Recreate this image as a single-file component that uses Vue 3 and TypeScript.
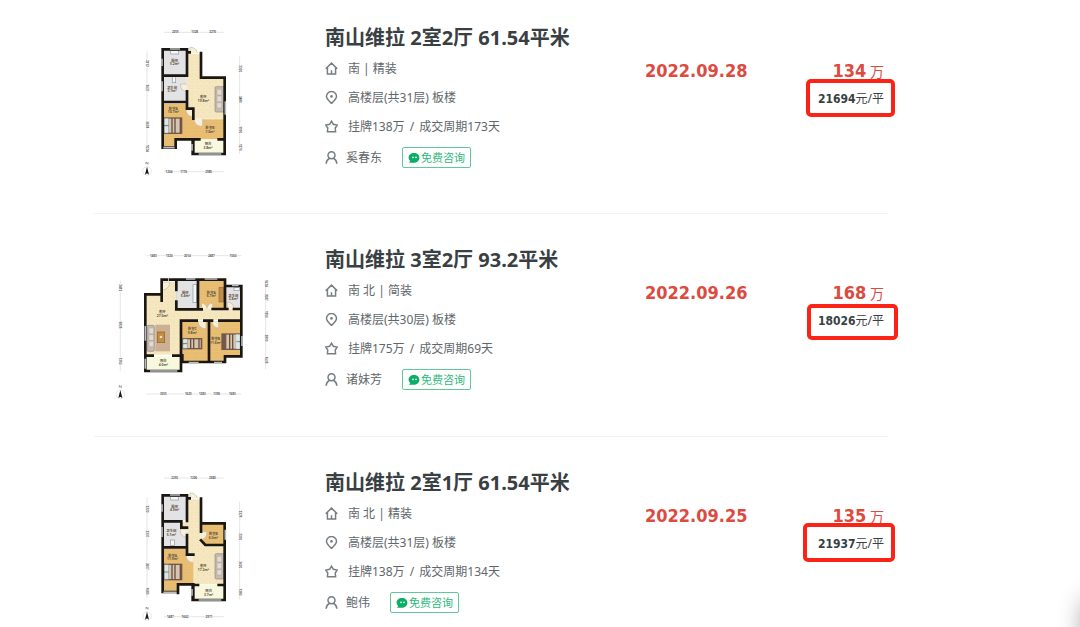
<script setup lang="ts">
type IconName = 'home' | 'pin' | 'star' | 'user'
type Label = [x: number, y: number, text: string]
type Rect = [x: number, y: number, w: number, h: number]

interface Plan {
  floors: { kind: 'wood' | 'tile' | 'grey' | 'balcony'; d: string }[]
  walls: string
  windows: string
  doors: string
  beds: Rect[]
  sofa: Rect
  rug?: Rect
  fixtures: Rect[]
  names: Label[]
  top: Label[]
  bottom: Label[]
  left: Label[]
  right: Label[]
  guides: string
  compass: [number, number]
}

interface Deal {
  id: number
  title: string
  facing: string
  fitment: string
  floor: string
  listed: string
  cycle: string
  agent: string
  date: string
  total: string
  unit: string
  mark: 'a' | 'b' | 'c'
  plan: Plan
}

const planA: Plan = {
  floors: [
    { kind: 'grey', d: 'M158 95h72v76h-72zM158 177h72v74h-72z' },
    { kind: 'tile', d: 'M234 107h38v73h71v122h-95v-33h-18v-95h4z' },
    { kind: 'wood', d: 'M158 257h72v15h20v92h-52v25h-40zM250 304h94v60h-94z' },
    { kind: 'balcony', d: 'M250 366h92v44h-92z' },
  ],
  walls: 'M158 94H231V103H239M273 105V179H344V408H248V364H197V389H158V94M158 173H231M231 104V172M231 220V272H250V302M250 364V408M158 252H210M231 270V252H214M250 364H268M326 364H344',
  windows: 'M156 122v22M156 190v30M346 250v40M160 389h34M266 408h68M180 93h30M246 378v20',
  doors: 'M240 105V88A20 20 0 0 1 262 104M230 198H212A18 18 0 0 0 230 220M250 274H228A20 20 0 0 0 250 296M253 302A20 20 0 0 0 278 324V302',
  beds: [[161, 298, 56, 50]],
  sofa: [315, 206, 28, 76],
  fixtures: [[182, 98, 24, 10], [187, 176, 10, 18]],
  names: [[194, 131, '厨房'], [194, 142, '5.2m²'], [186, 212, '卫生间'], [186, 223, '3.7m²'], [280, 240, '客厅'], [280, 251, '19.8m²'], [190, 275, '卧室A'], [190, 286, '10.7m²'], [300, 334, '卧室B'], [300, 345, '7.0m²'], [294, 382, '阳台'], [294, 393, '3.8m²']],
  top: [[196, 46, '2255'], [254, 46, '1328'], [308, 46, '2270']],
  bottom: [[177, 464, '1204'], [221, 464, '1770'], [296, 464, '2985']],
  left: [[111, 136, '2312'], [111, 210, '2637'], [111, 320, '3638'], [111, 391, '1024']],
  right: [[389, 152, '2320'], [389, 244, '3480'], [389, 335, '1990'], [389, 388, '1270']],
  guides: 'M162 43H341M162 461H341M111 100V403M389 113V408',
  compass: [111, 459],
}

const planC: Plan = {
  floors: [
    { kind: 'grey', d: 'M158 99h72v72h-72zM158 177h54v18h18v56h-72z' },
    { kind: 'tile', d: 'M234 109h38v126l20 13h52v116h-96v-93h-18v-76h-16v-18h20z' },
    { kind: 'wood', d: 'M158 257h72v15h20v92h-48v25h-44zM274 182h70v64h-54l-16-16z' },
    { kind: 'balcony', d: 'M250 366h92v42h-92z' },
  ],
  walls: 'M158 97H231V106H239M273 107V181H344V411H248V364H204V387H158V97M158 175H214V194H231M231 106V174M231 216V275H250M231 272V253H214M158 253H210M273 181V206M273 232L286 246H344M250 364V411M250 366H264M326 366H344M204 364V390',
  windows: 'M156 124v22M156 192v30M346 200v30M160 388h40M266 411h68M180 96h30M246 378v20',
  doors: 'M240 107V90A20 20 0 0 1 262 106M230 198H212A18 18 0 0 0 230 222M250 276H228A20 20 0 0 0 250 298M274 206H290A20 20 0 0 1 274 230',
  beds: [[161, 302, 56, 50]],
  sofa: [315, 272, 28, 76],
  fixtures: [[182, 101, 24, 10], [181, 231, 12, 16]],
  names: [[194, 134, '厨房'], [194, 145, '4.9m²'], [184, 207, '卫生间'], [184, 218, '5.1m²'], [310, 216, '卧室B'], [310, 227, '6.0m²'], [188, 281, '卧室A'], [188, 292, '11.9m²'], [280, 313, '客厅'], [280, 324, '17.2m²'], [296, 387, '阳台'], [296, 398, '3.7m²']],
  top: [[194, 48, '2255'], [251, 48, '1200'], [307, 48, '2380']],
  bottom: [[181, 464, '1487'], [225, 464, '1602'], [297, 464, '2971']],
  left: [[111, 138, '2320'], [111, 213, '2337'], [111, 310, '3607'], [111, 384, '1080']],
  right: [[389, 153, '2325'], [389, 221, '2330'], [389, 305, '3620'], [389, 387, '1380']],
  guides: 'M162 45H341M162 461H341M111 102V405M389 116V410',
  compass: [111, 459],
}

const planB: Plan = {
  floors: [
    { kind: 'tile', d: 'M109 164h46v-38h42v81h195v33h-182v104h-101z' },
    { kind: 'grey', d: 'M201 120h61v85h-61zM347 141h47v63h-47z' },
    { kind: 'wood', d: 'M266 121h76v83h-76zM213 243h82v125h-82zM299 243h93v104h-48v21h-45z' },
    { kind: 'balcony', d: 'M109 349h101v42h-101z' },
  ],
  walls: 'M106 163H155V119H170M180 119H345V138H394V349H345V366H217V346H213V242H260M106 163V393H213V348M106 347H128M190 347H213M199 119V150M199 185V208H275M264 119V207M345 138V207M308 207H352M372 207H394M283 242H306M328 242H394M297 242V366M155 163V182M106 363V393',
  windows: 'M228 117h28M284 117h38M366 136h20M106 258v44M120 393h82M236 368h30M312 368h24M396 288v30M106 356v30',
  doors: 'M158 126H179A22 22 0 0 1 158 150M275 207V190A16 16 0 0 1 291 205A16 16 0 0 1 308 190V207M352 206V186A20 20 0 0 1 372 206M264 244A22 22 0 0 0 288 266V244M306 244A20 20 0 0 0 326 264V244M199 155V180',
  beds: [[217, 294, 60, 34], [334, 280, 58, 50]],
  sofa: [111, 256, 22, 78],
  rug: [142, 254, 34, 80],
  fixtures: [[249, 134, 11, 54], [372, 143, 16, 9]],
  names: [[226, 161, '厨房'], [226, 172, '5.4m²'], [304, 161, '卧室A'], [304, 172, '6.7m²'], [370, 170, '卫生间'], [370, 181, '2.8m²'], [157, 220, '客厅'], [157, 231, '27.0m²'], [247, 271, '卧室C'], [247, 282, '9.8m²'], [317, 301, '卧室B'], [317, 312, '11.6m²'], [160, 367, '阳台'], [160, 378, '4.0m²']],
  top: [[130, 50, '1483'], [178, 50, '1320'], [232, 50, '2014'], [304, 50, '2487'], [369, 50, '1560']],
  bottom: [[160, 465, '3355'], [235, 465, '1625'], [277, 465, '1283'], [320, 465, '1390'], [367, 465, '1683']],
  left: [[31, 143, '2412'], [31, 255, '5835'], [31, 363, '1250']],
  right: [[467, 130, '1624'], [467, 172, '2087'], [467, 223, '1250'], [467, 294, '3890'], [467, 360, '1635']],
  guides: 'M110 47H394M110 462H394M31 122V394M467 122V388',
  compass: [31, 463],
}

const deals: Deal[] = [
  { id: 1, title: '南山维拉 2室2厅 61.54平米', facing: '南', fitment: '精装', floor: '高楼层(共31层) 板楼', listed: '挂牌138万', cycle: '成交周期173天', agent: '奚春东', date: '2022.09.28', total: '134', unit: '21694', mark: 'a', plan: planA },
  { id: 2, title: '南山维拉 3室2厅 93.2平米', facing: '南 北', fitment: '简装', floor: '高楼层(共30层) 板楼', listed: '挂牌175万', cycle: '成交周期69天', agent: '诸妹芳', date: '2022.09.26', total: '168', unit: '18026', mark: 'b', plan: planB },
  { id: 3, title: '南山维拉 2室1厅 61.54平米', facing: '南 北', fitment: '精装', floor: '高楼层(共31层) 板楼', listed: '挂牌138万', cycle: '成交周期134天', agent: '鲍伟', date: '2022.09.25', total: '135', unit: '21937', mark: 'c', plan: planC },
]

const icons: Record<IconName, string> = {
  home: 'M.8 7.2L7 1.2L13.2 7.2M2.6 6V13H11.4V6M7 9V13',
  pin: 'M7 13.4C4.2 10.6 1.6 8.2 1.6 5.8A5.4 5.2 0 0 1 12.4 5.8C12.4 8.2 9.8 10.6 7 13.4Z',
  star: 'M7 1.3L9 4.6L13.2 5.5L11 8.6L11.4 12.6H2.6L3 8.6L.8 5.5L5 4.6Z',
  user: 'M7 8.4A3.8 3.8 0 1 0 7 .8A3.8 3.8 0 1 0 7 8.4M1.2 13.8C1.4 10.8 2.8 9 4.8 7.8M12.8 13.8C12.6 10.8 11.2 9 9.2 7.8',
}
</script>

<template>
  <main class="page">
    <ul class="deals">
      <li v-for="deal in deals" :key="deal.id" class="deal">
        <svg class="plan" viewBox="0 0 495 495" role="img" :aria-label="deal.title">
          <defs>
            <pattern :id="`wood${deal.id}`" width="60" height="12" patternUnits="userSpaceOnUse">
              <rect width="60" height="12" fill="#eac077" />
              <path d="M0 .5H60M0 6.5H60M18 0V6M46 6V12" stroke="#deac5b" />
            </pattern>
            <pattern :id="`tile${deal.id}`" width="18" height="18" patternUnits="userSpaceOnUse">
              <rect width="18" height="18" fill="#f5e7c0" />
              <path d="M2 5L7 9M11 3L14 6M9 14L15 12" stroke="#eddaa6" stroke-width="2" />
            </pattern>
          </defs>
          <path
            v-for="floor in deal.plan.floors"
            :key="floor.kind"
            :d="floor.d"
            :fill="floor.kind === 'wood' ? `url(#wood${deal.id})` : floor.kind === 'tile' ? `url(#tile${deal.id})` : floor.kind === 'grey' ? '#e3e2e4' : '#f8f8df'"
          />
          <g v-if="deal.plan.rug">
            <rect :x="deal.plan.rug[0] - 6" :y="deal.plan.rug[1]" :width="deal.plan.rug[2] + 10" :height="deal.plan.rug[3]" fill="#cbb094" />
            <rect :x="deal.plan.rug[0]" :y="deal.plan.rug[1] + 22" width="22" height="32" fill="#c48c40" stroke="#8a632f" stroke-width="2" />
            <circle :cx="deal.plan.rug[0] + 11" :cy="deal.plan.rug[1] + 37" r="4" fill="#f0e2c4" />
          </g>
          <rect v-if="deal.plan.rug" x="327" y="142" width="13" height="44" fill="#c08e4b" stroke="#926a37" stroke-width="2" />
          <path :d="deal.plan.doors" class="door" />
          <rect v-for="(f, i) in deal.plan.fixtures" :key="`f${i}`" :x="f[0]" :y="f[1]" :width="f[2]" :height="f[3]" class="fixture" />
          <g v-for="(b, i) in deal.plan.beds" :key="`b${i}`">
            <rect :x="b[0]" :y="b[1]" :width="b[2]" :height="b[3]" fill="#74594a" />
            <rect :x="b[0] + 15" :y="b[1] + 4" :width="b[2] - 20" :height="b[3] - 8" fill="#d8c5ae" />
            <path :d="`M${b[0] + 25} ${b[1] + 2}v${b[3] - 4}M${b[0] + 34} ${b[1] + 2}v${b[3] - 4}M${b[0] + 50} ${b[1] + 2}v${b[3] - 4}`" stroke="#685044" stroke-width="4" />
            <rect :x="b[0] + (deal.id === 2 && i === 1 ? 43 : 2)" :y="b[1] + 3" width="13" :height="b[3] / 2 - 4" rx="2" fill="#dce7e8" stroke="#78979e" />
            <rect :x="b[0] + (deal.id === 2 && i === 1 ? 43 : 2)" :y="b[1] + b[3] / 2 + 1" width="13" :height="b[3] / 2 - 4" rx="2" fill="#dce7e8" stroke="#78979e" />
          </g>
          <rect :x="deal.plan.sofa[0]" :y="deal.plan.sofa[1]" :width="deal.plan.sofa[2]" :height="deal.plan.sofa[3]" rx="4" fill="#c7bbb1" stroke="#91857e" stroke-width="2" />
          <path :d="`M${deal.plan.sofa[0] + 6} ${deal.plan.sofa[1] + 8}h14v17h-14zm0 20h14v17h-14zm0 20h14v16h-14z`" fill="#e3dad1" stroke="#9f9185" />
          <path :d="deal.plan.walls" class="wall" />
          <path :d="deal.plan.windows" class="window" />
          <g class="room">
            <text v-for="(n, i) in deal.plan.names" :key="i" :x="n[0]" :y="n[1]">{{ n[2] }}</text>
          </g>
          <path :d="deal.plan.guides" class="guide" />
          <g class="dim">
            <text v-for="(n, i) in [...deal.plan.top, ...deal.plan.bottom]" :key="i" :x="n[0]" :y="n[1]">{{ n[2] }}</text>
            <text v-for="(n, i) in [...deal.plan.left, ...deal.plan.right]" :key="`s${i}`" :transform="`translate(${n[0] - 3} ${n[1]}) rotate(90)`">{{ n[2] }}</text>
          </g>
          <g :transform="`translate(${deal.plan.compass[0]} ${deal.plan.compass[1]})`">
            <circle r="13" fill="none" stroke="#bbb" />
            <path d="M0-13L6 11L0 7L-6 11Z" fill="#161616" />
            <path d="M-3-20V-27L3-20V-27" fill="none" stroke="#777" stroke-width="2" />
          </g>
        </svg>

        <div class="info">
          <h2 class="title">{{ deal.title }}</h2>
          <p class="line">
            <svg class="icon" viewBox="0 0 14 14"><path :d="icons.home" /></svg>
            <span>{{ deal.facing }} | {{ deal.fitment }}</span>
          </p>
          <p class="line">
            <svg class="icon" viewBox="0 0 14 14"><path :d="icons.pin" /><circle cx="7" cy="5.8" r="1.4" class="dot" /></svg>
            <span>{{ deal.floor }}</span>
          </p>
          <p class="line">
            <svg class="icon" viewBox="0 0 14 14"><path :d="icons.star" /></svg>
            <span>{{ deal.listed }} <span class="slash">/</span> {{ deal.cycle }}</span>
          </p>
          <div class="line agent">
            <svg class="icon" viewBox="0 0 14 14"><path :d="icons.user" /></svg>
            <span>{{ deal.agent }}</span>
            <button type="button" class="ask">
              <svg class="bubble" viewBox="0 0 12 12">
                <path d="M6 1C2.9 1 .6 2.9.6 5.5C.6 7 1.2 8.2 2.2 9L1 10.8H6C9.1 10.8 11.4 8.5 11.4 5.8C11.4 3 9.1 1 6 1Z" fill="#0bae66" />
                <circle cx="5" cy="5.4" r=".8" fill="#fff" />
                <circle cx="8" cy="5.4" r=".8" fill="#fff" />
              </svg>
              免费咨询
            </button>
          </div>
        </div>

        <div class="date">{{ deal.date }}</div>

        <div class="price">
          <div class="total"><strong>{{ deal.total }}</strong> 万</div>
          <div class="unit">
            <strong>{{ deal.unit }}</strong>元/平
            <span class="mark" :class="`mark-${deal.mark}`"></span>
          </div>
        </div>
      </li>
    </ul>
    <div class="corner"></div>
  </main>
</template>

<style>
body {
  margin: 0;
  background: #fff;
}
</style>

<style scoped>
.page {
  position: relative;
  height: 100vh;
  overflow: hidden;
  box-sizing: border-box;
  padding: 0 192px 0 94px;
  background: #fff;
  color: #394043;
  font-family: "Noto Sans", "Noto Sans CJK SC", sans-serif;
}
.deals {
  margin: 0;
  padding: 0;
  list-style: none;
}
.deal {
  display: grid;
  grid-template-columns: 231px 320px 1fr 1fr;
  align-items: start;
  padding: 26px 0 31px;
  border-bottom: 1px solid #f3f3f3;
}
.deal:first-child {
  padding: 18px 0 30px;
}
.plan {
  display: block;
  width: 165px;
  height: 165px;
  margin-left: 16px;
}
.wall {
  fill: none;
  stroke: #1a1612;
  stroke-width: 8;
  stroke-linecap: square;
}
.window {
  fill: none;
  stroke: #b9bcbf;
  stroke-width: 5;
}
.door {
  fill: #f7efdc;
  stroke: #c4b89e;
  stroke-width: 2;
}
.fixture {
  fill: #f6f6f6;
  stroke: #8c999e;
  stroke-width: 2;
}
.guide {
  fill: none;
  stroke: #b0b0b0;
  stroke-width: 1;
}
.room text,
.dim text {
  text-anchor: middle;
  font-family: "Noto Sans", "Noto Sans CJK SC", sans-serif;
}
.room text {
  font-size: 10px;
  font-weight: 700;
  fill: #5c503e;
}
.dim text {
  font-size: 9px;
  font-weight: 700;
  fill: #555;
  stroke: #fff;
  stroke-width: 3;
  paint-order: stroke;
}
.title {
  margin: 0;
  padding-top: 4px;
  font-size: 20px;
  font-weight: 700;
  line-height: 32px;
  white-space: nowrap;
}
.line {
  display: flex;
  align-items: center;
  gap: 10px;
  height: 29px;
  margin: 0;
  color: #60676b;
  font-size: 12px;
  line-height: 20px;
  white-space: nowrap;
}
.slash {
  margin: 0 2px;
}
.agent {
  gap: 8px;
  height: 33px;
}
.icon {
  width: 13px;
  height: 13px;
  fill: none;
  stroke: #777e82;
  stroke-width: 1.6;
}
.icon .dot {
  fill: #777e82;
  stroke: none;
}
.ask {
  display: flex;
  align-items: center;
  gap: 1px;
  height: 21px;
  margin: 0 0 0 12px;
  padding: 0 5px;
  border: 1px solid #5fc99b;
  border-radius: 2px;
  background: #fff;
  color: #2fb87e;
  font-family: inherit;
  font-size: 11px;
  line-height: 18px;
}
.bubble {
  width: 12px;
  height: 12px;
}
.date,
.total {
  padding-top: 41px;
  color: #dc4b3f;
  font-size: 18px;
  line-height: 24px;
  white-space: nowrap;
}
.date,
.price strong {
  font-family: "DejaVu Sans Condensed", "DejaVu Sans", sans-serif;
  font-weight: 700;
}
.price {
  padding-right: 4px;
  text-align: right;
}
.total {
  font-size: 14px;
}
.total strong {
  font-size: 18px;
}
.unit {
  position: relative;
  padding-top: 5px;
  font-size: 12px;
  line-height: 20px;
  white-space: nowrap;
}
.mark {
  position: absolute;
  box-sizing: border-box;
  border: 4px solid #fb2216;
  border-radius: 5px;
}
.mark-a {
  top: -5px;
  right: -11px;
  width: 89px;
  height: 38px;
}
.mark-b {
  top: -2px;
  right: -14px;
  width: 91px;
  height: 36px;
}
.mark-c {
  top: -6px;
  right: -11px;
  width: 92px;
  height: 39px;
}
.corner {
  position: absolute;
  right: -40px;
  bottom: -40px;
  width: 36px;
  height: 68px;
  border-radius: 12px;
  box-shadow: 0 0 26px rgba(0, 0, 0, 0.4);
}
</style>
